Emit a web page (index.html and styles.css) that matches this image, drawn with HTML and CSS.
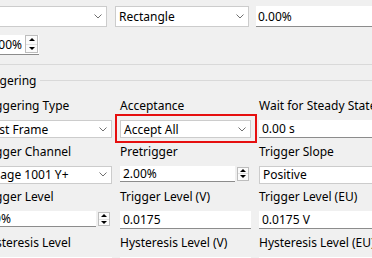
FILE: index.html
```html
<!DOCTYPE html>
<html lang="en">
<head>
    <meta charset="UTF-8">
    <meta name="viewport" content="width=device-width, initial-scale=1.0">
    <title>Triggering</title>
    <link rel="stylesheet" href="styles.css">
</head>
<body>
    <div class="page">
        <div class="top-row">
            <div class="combo combo-a">
                <span></span>
                <svg class="chev" width="8" height="5" viewBox="0 0 8 5"><path d="M0.5 0.5 L4 4 L7.5 0.5" fill="none" stroke="#707070"/></svg>
            </div>
            <div class="combo combo-b">
                <span>Rectangle</span>
                <svg class="chev" width="8" height="5" viewBox="0 0 8 5"><path d="M0.5 0.5 L4 4 L7.5 0.5" fill="none" stroke="#707070"/></svg>
            </div>
            <div class="edit edit-top">0.00%</div>
        </div>

        <div class="spin-top">
            <span class="spin-top-text">100%</span>
            <div class="spin-btns spin-btns-top">
                <span class="arrow-up"></span>
                <span class="arrow-down"></span>
            </div>
        </div>

        <div class="rule"></div>

        <div class="group">
            <div class="group-title">
                <span>Triggering</span>
                <div class="group-line"></div>
            </div>

            <div class="grid">
                <div class="cell">
                    <div class="label">Triggering Type</div>
                    <div class="combo field">
                        <span>First Frame</span>
                        <svg class="chev" width="8" height="5" viewBox="0 0 8 5"><path d="M0.5 0.5 L4 4 L7.5 0.5" fill="none" stroke="#707070"/></svg>
                    </div>
                </div>
                <div class="cell">
                    <div class="label">Acceptance</div>
                    <div class="combo field highlighted">
                        <span>Accept All</span>
                        <svg class="chev" width="8" height="5" viewBox="0 0 8 5"><path d="M0.5 0.5 L4 4 L7.5 0.5" fill="none" stroke="#707070"/></svg>
                    </div>
                </div>
                <div class="cell">
                    <div class="label">Wait for Steady State</div>
                    <div class="edit field">0.00 s</div>
                </div>

                <div class="cell">
                    <div class="label">Trigger Channel</div>
                    <div class="combo field">
                        <span>Image 1001 Y+</span>
                        <svg class="chev" width="8" height="5" viewBox="0 0 8 5"><path d="M0.5 0.5 L4 4 L7.5 0.5" fill="none" stroke="#707070"/></svg>
                    </div>
                </div>
                <div class="cell">
                    <div class="label">Pretrigger</div>
                    <div class="spin field">
                        <div class="edit spin-field">2.00%</div>
                        <div class="spin-btns">
                            <span class="arrow-up"></span>
                            <span class="arrow-down"></span>
                        </div>
                    </div>
                </div>
                <div class="cell">
                    <div class="label">Trigger Slope</div>
                    <div class="combo field">
                        <span>Positive</span>
                        <svg class="chev" width="8" height="5" viewBox="0 0 8 5"><path d="M0.5 0.5 L4 4 L7.5 0.5" fill="none" stroke="#707070"/></svg>
                    </div>
                </div>

                <div class="cell">
                    <div class="label">Trigger Level</div>
                    <div class="spin field">
                        <div class="edit spin-field">1.0%</div>
                        <div class="spin-btns">
                            <span class="arrow-up"></span>
                            <span class="arrow-down"></span>
                        </div>
                    </div>
                </div>
                <div class="cell">
                    <div class="label">Trigger Level (V)</div>
                    <div class="edit field">0.0175</div>
                </div>
                <div class="cell">
                    <div class="label">Trigger Level (EU)</div>
                    <div class="edit field">0.0175 V</div>
                </div>

                <div class="cell">
                    <div class="label">Hysteresis Level</div>
                    <div class="edit field">0.0%</div>
                </div>
                <div class="cell">
                    <div class="label">Hysteresis Level (V)</div>
                    <div class="edit field">0.0000</div>
                </div>
                <div class="cell">
                    <div class="label">Hysteresis Level (EU)</div>
                    <div class="edit field">0.0000 V</div>
                </div>
            </div>
        </div>
    </div>
</body>
</html>
```

FILE: styles.css
```css
body {
    margin: 0;
    background: #f0f0f0;
    font-family: "Noto Sans", sans-serif;
    font-size: 12px;
    color: #000;
    overflow: hidden;
}
.page {
    margin-left: -22px;
    padding-top: 6px;
    width: 430px;
}
.top-row {
    display: flex;
    height: 21px;
}
.combo {
    box-sizing: border-box;
    background: #fff;
    border: 1px solid #cccccc;
    display: flex;
    align-items: center;
    justify-content: space-between;
    padding: 0 4px 0 3px;
    white-space: nowrap;
}
.chev {
    flex: none;
}
.combo-a {
    width: 129px;
}
.combo-b {
    width: 134px;
    margin-left: 8px;
}
.edit {
    box-sizing: border-box;
    background: #fff;
    border-bottom: 1px solid #8c8c8c;
    padding: 0 3px;
    display: flex;
    align-items: center;
    white-space: nowrap;
}
.edit-top {
    width: 150px;
    margin-left: 7px;
    padding-left: 2px;
}
.spin-top {
    box-sizing: border-box;
    width: 61px;
    height: 20px;
    margin-top: 8px;
    background: #fff;
    border-bottom: 1px solid #8c8c8c;
    display: flex;
    align-items: center;
    justify-content: flex-end;
}
.spin-top-text {
    padding-right: 3px;
}
.spin-btns {
    box-sizing: border-box;
    flex: none;
    width: 12px;
    height: 14px;
    border: 1px solid #bdbdbd;
    background: #fbfbfb;
    display: flex;
    flex-direction: column;
}
.spin-btns-top {
    width: 13px;
    height: 18px;
    margin-right: 1px;
    align-self: flex-start;
}
.spin-btns span {
    flex: 1;
    display: flex;
    align-items: center;
    justify-content: center;
}
.spin-btns .arrow-up {
    border-bottom: 1px solid #e2e2e2;
}
.arrow-up::before,
.arrow-down::before {
    content: "";
    border-left: 3px solid transparent;
    border-right: 3px solid transparent;
}
.arrow-up::before {
    border-bottom: 3px solid #000;
}
.arrow-down::before {
    border-top: 3px solid #000;
}
.rule {
    height: 1px;
    margin-top: 9px;
    background: #d9d9d9;
}
.group-title {
    display: flex;
    align-items: center;
    height: 15px;
    line-height: 15px;
    margin-top: 8px;
}
.group-line {
    flex: 1;
    height: 1px;
    margin-left: 3px;
    background: #d9d9d9;
}
.grid {
    display: grid;
    grid-template-columns: 131px 131px 131px;
    column-gap: 8px;
    row-gap: 5.5px;
    margin-top: 10px;
    margin-left: 3px;
}
.cell {
    display: flex;
    flex-direction: column;
}
.label {
    height: 15px;
    line-height: 15px;
    margin-bottom: 7px;
    white-space: nowrap;
}
.field {
    height: 18px;
}
.spin {
    display: flex;
    align-items: flex-start;
    gap: 2px;
    padding-right: 2px;
}
.spin-field {
    flex: 1;
    height: 16px;
}
.spin .spin-btns {
    margin-top: 1px;
}
.highlighted {
    position: relative;
}
.highlighted::after {
    content: "";
    position: absolute;
    top: -7px;
    left: -6px;
    right: -7px;
    bottom: -6px;
    border: 2px solid #e60f0f;
}
```
